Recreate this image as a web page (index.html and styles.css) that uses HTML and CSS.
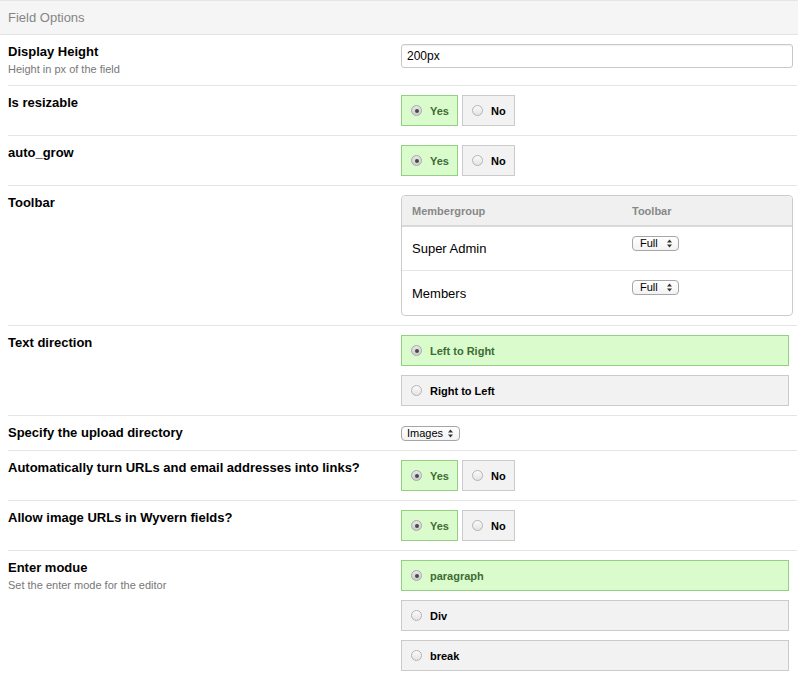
FILE: index.html
```html
<!DOCTYPE html>
<html>
<head>
<meta charset="utf-8">
<title>Field Options</title>
<link rel="stylesheet" href="styles.css">
</head>
<body>
<div class="panel">
  <div class="panel-head">Field Options</div>
  <div class="rows">
    <div class="row">
      <div class="label">
        <div class="title">Display Height</div>
        <div class="desc">Height in px of the field</div>
      </div>
      <div class="control"><input class="text-input" type="text" value="200px"></div>
    </div>

    <div class="row">
      <div class="label"><div class="title">Is resizable</div></div>
      <div class="control">
        <div class="toggle">
          <label class="opt on"><span class="radio checked"></span>Yes</label>
          <label class="opt"><span class="radio"></span>No</label>
        </div>
      </div>
    </div>

    <div class="row">
      <div class="label"><div class="title">auto_grow</div></div>
      <div class="control">
        <div class="toggle">
          <label class="opt on"><span class="radio checked"></span>Yes</label>
          <label class="opt"><span class="radio"></span>No</label>
        </div>
      </div>
    </div>

    <div class="row">
      <div class="label"><div class="title">Toolbar</div></div>
      <div class="control">
        <table class="grid">
          <thead>
            <tr><th class="col-group">Membergroup</th><th>Toolbar</th></tr>
          </thead>
          <tbody>
            <tr>
              <td class="name">Super Admin</td>
              <td class="pick"><span class="sel sel-full">Full<svg class="arr" width="5" height="9" viewBox="0 0 5 9"><path d="M2.5 0.5 L5 3.6 H0 Z M2.5 8.5 L5 5.4 H0 Z" fill="#333"/></svg></span></td>
            </tr>
            <tr>
              <td class="name">Members</td>
              <td class="pick"><span class="sel sel-full">Full<svg class="arr" width="5" height="9" viewBox="0 0 5 9"><path d="M2.5 0.5 L5 3.6 H0 Z M2.5 8.5 L5 5.4 H0 Z" fill="#333"/></svg></span></td>
            </tr>
          </tbody>
        </table>
      </div>
    </div>

    <div class="row">
      <div class="label"><div class="title">Text direction</div></div>
      <div class="control">
        <div class="stack">
          <label class="opt wide on"><span class="radio checked"></span>Left to Right</label>
          <label class="opt wide"><span class="radio"></span>Right to Left</label>
        </div>
      </div>
    </div>

    <div class="row">
      <div class="label"><div class="title">Specify the upload directory</div></div>
      <div class="control">
        <span class="sel sel-images">Images<svg class="arr" width="5" height="9" viewBox="0 0 5 9"><path d="M2.5 0.5 L5 3.6 H0 Z M2.5 8.5 L5 5.4 H0 Z" fill="#333"/></svg></span>
      </div>
    </div>

    <div class="row">
      <div class="label"><div class="title">Automatically turn URLs and email addresses into links?</div></div>
      <div class="control">
        <div class="toggle">
          <label class="opt on"><span class="radio checked"></span>Yes</label>
          <label class="opt"><span class="radio"></span>No</label>
        </div>
      </div>
    </div>

    <div class="row">
      <div class="label"><div class="title">Allow image URLs in Wyvern fields?</div></div>
      <div class="control">
        <div class="toggle">
          <label class="opt on"><span class="radio checked"></span>Yes</label>
          <label class="opt"><span class="radio"></span>No</label>
        </div>
      </div>
    </div>

    <div class="row last">
      <div class="label">
        <div class="title">Enter modue</div>
        <div class="desc">Set the enter mode for the editor</div>
      </div>
      <div class="control">
        <div class="stack">
          <label class="opt wide on"><span class="radio checked"></span>paragraph</label>
          <label class="opt wide"><span class="radio"></span>Div</label>
          <label class="opt wide"><span class="radio"></span>break</label>
        </div>
      </div>
    </div>
  </div>
</div>
</body>
</html>
```

FILE: styles.css
```css
* { box-sizing: border-box; }

html, body {
  margin: 0;
  padding: 0;
  background: #fff;
}

body {
  font-family: "Liberation Sans", Arial, Helvetica, sans-serif;
  color: #000;
  width: 798px;
}

.panel {
  width: 798px;
}

.panel-head {
  height: 35px;
  background: #f5f5f5;
  border-top: 1px solid #e6e6e6;
  border-bottom: 1px solid #e3e3e3;
  padding-left: 8px;
  font-size: 13px;
  line-height: 33px;
  color: #858585;
}

.rows {
  margin: 0 1px 0 8px;
}

.row {
  display: grid;
  grid-template-columns: 393px 1fr;
  padding: 9px 0;
  border-bottom: 1px solid #e5e5e5;
}

.row.last {
  border-bottom: none;
}

.title {
  font-size: 13px;
  font-weight: bold;
  line-height: 16px;
}

.desc {
  margin-top: 3px;
  font-size: 11px;
  line-height: 13px;
  color: #777;
}

.control {
  padding-right: 4px;
  font-size: 13px;
  line-height: 16px;
}

.text-input {
  display: block;
  width: 100%;
  height: 24px;
  margin: 0;
  padding: 0 5px;
  border: 1px solid #c8c8c8;
  border-radius: 3px;
  box-shadow: inset 0 1px 1px rgba(0, 0, 0, 0.06);
  font-family: "Liberation Sans", Arial, sans-serif;
  font-size: 12px;
  color: #000;
  background: #fff;
}

.toggle {
  display: flex;
  gap: 4px;
}

.stack {
  display: flex;
  flex-direction: column;
  gap: 9px;
  margin-right: 4px;
}

.opt {
  display: flex;
  align-items: center;
  height: 31px;
  padding: 0 8px 0 9px;
  border: 1px solid #cbcbcb;
  background: #f2f2f2;
  font-size: 11px;
  font-weight: bold;
  color: #000;
}

.opt.on {
  background: #dafccd;
  border-color: #94cf84;
  color: #3e6b34;
}

.radio {
  flex: none;
  width: 11px;
  height: 11px;
  margin-right: 8px;
  border-radius: 50%;
  border: 1px solid #b4b4b4;
  background: linear-gradient(#fbfbfb, #e3e3e3);
  display: flex;
  align-items: center;
  justify-content: center;
}

.radio.checked {
  background: linear-gradient(#e6e6e6, #cfcfcf);
  border-color: #a8a8a8;
}

.radio.checked::after {
  content: "";
  width: 4px;
  height: 4px;
  border-radius: 50%;
  background: #4a4a4a;
}

.grid {
  width: 100%;
  border-collapse: separate;
  border-spacing: 0;
  border: 1px solid #cccccc;
  border-radius: 4px;
  overflow: hidden;
}

.grid th {
  height: 31px;
  padding: 0 10px;
  background: #f0f0f0;
  border-bottom: 2px solid #d9d9d9;
  text-align: left;
  font-size: 11px;
  font-weight: bold;
  color: #888;
}

.grid th.col-group {
  width: 220px;
}

.grid td {
  height: 44px;
  padding: 0 10px;
  font-size: 13px;
  border-bottom: 1px solid #e5e5e5;
}

.grid tbody tr:last-child td {
  border-bottom: none;
}

.grid td.name {
  vertical-align: middle;
  padding-top: 1px;
}

.grid td.pick {
  vertical-align: top;
  padding-top: 9px;
}

.sel {
  display: inline-flex;
  align-items: center;
  justify-content: space-between;
  height: 15px;
  padding: 0 6px 0 7px;
  border: 1px solid #a6a6a6;
  border-radius: 4px;
  background: linear-gradient(#ffffff, #f3f3f3);
  font-size: 11px;
  line-height: 13px;
  color: #000;
  vertical-align: top;
}

.sel-full {
  width: 47px;
}

.sel-images {
  width: 59px;
  margin-top: 1px;
  padding-left: 5px;
}

.arr {
  display: block;
}
```
